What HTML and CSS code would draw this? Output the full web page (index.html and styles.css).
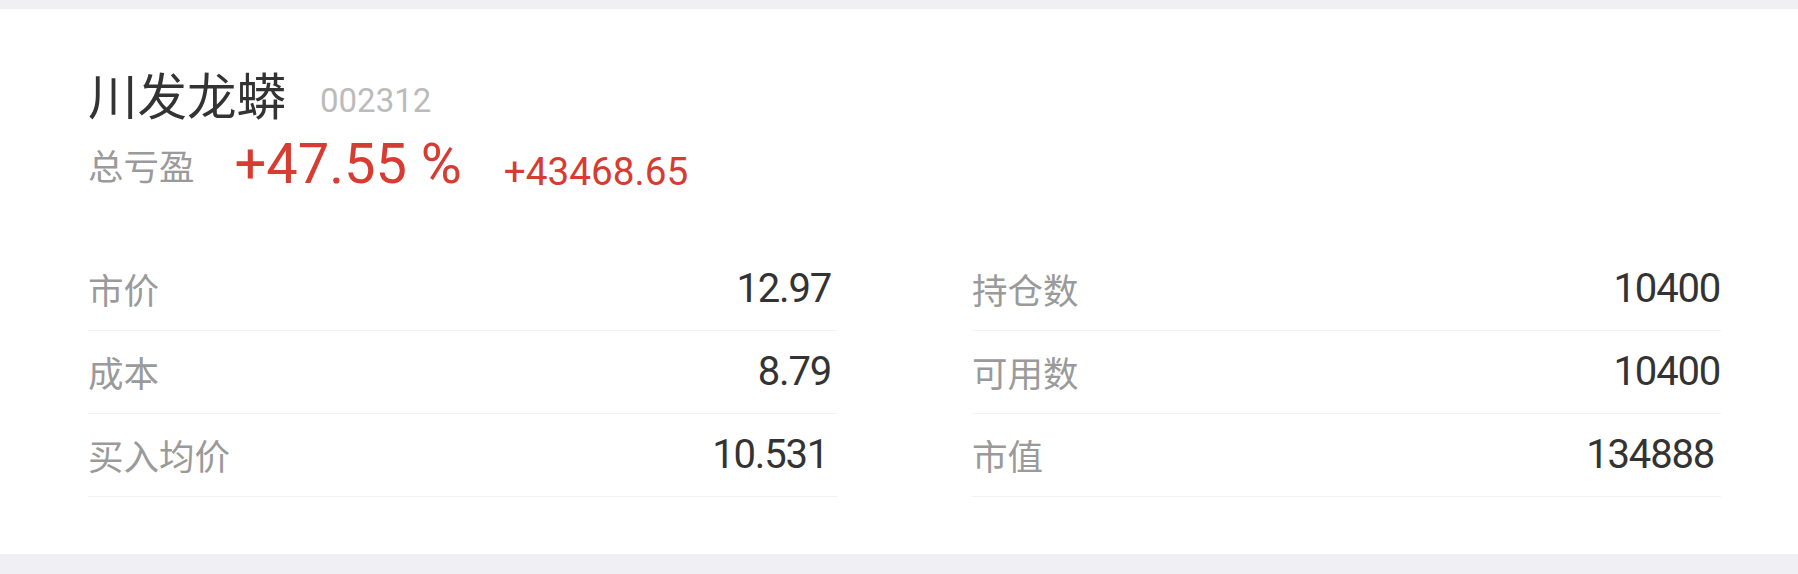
FILE: index.html
```html
<!DOCTYPE html>
<html lang="zh-CN">
<head>
<meta charset="utf-8">
<title>持仓详情</title>
<link rel="stylesheet" href="styles.css">
</head>
<body>
<div class="page">
  <section class="card">
    <div class="title-row">
      <h1 class="name">川发龙蟒</h1>
      <span class="code">002312</span>
    </div>
    <div class="pl-row">
      <span class="pl-label">总亏盈</span>
      <span class="pl-pct">+47.55 %</span>
      <span class="pl-amt">+43468.65</span>
    </div>
    <div class="grid">
      <div class="col col-left">
        <div class="row"><span class="label">市价</span><span class="val">12.97</span></div>
        <div class="row"><span class="label">成本</span><span class="val">8.79</span></div>
        <div class="row"><span class="label">买入均价</span><span class="val val-nudge">10.531</span></div>
      </div>
      <div class="col col-right">
        <div class="row"><span class="label">持仓数</span><span class="val">10400</span></div>
        <div class="row"><span class="label">可用数</span><span class="val">10400</span></div>
        <div class="row"><span class="label">市值</span><span class="val val-nudge-lg">134888</span></div>
      </div>
    </div>
  </section>
</div>
</body>
</html>
```
FILE: styles.css
```css
html, body {
  margin: 0;
  padding: 0;
}
body {
  background: #efeff4;
  font-family: "Noto Sans CJK SC", "Noto Sans", sans-serif;
}
.page {
  padding-top: 9px;
  height: 565px;
  box-sizing: border-box;
}
.card {
  background: #ffffff;
  padding: 55px 77px 57px 88px;
}
.title-row {
  display: flex;
  align-items: flex-end;
  height: 60px;
}
.name {
  margin: 0;
  font-family: "Noto Sans CJK SC", sans-serif;
  font-weight: 400;
  font-size: 49.5px;
  line-height: 60px;
  color: #333333;
}
.code {
  margin-left: 34px;
  font-family: Roboto, "Noto Sans", sans-serif;
  font-size: 33px;
  line-height: 46px;
  color: #bbbbbb;
}
.pl-row {
  display: flex;
  align-items: flex-end;
  margin-top: 10px;
  height: 60px;
}
.pl-label {
  font-family: "Noto Sans CJK SC", sans-serif;
  font-size: 35.5px;
  line-height: 58px;
  color: #9a9a9a;
}
.pl-pct {
  margin-left: 40px;
  font-family: Roboto, sans-serif;
  font-size: 56px;
  line-height: 60px;
  color: #d63c31;
}
.pl-amt {
  margin-left: 42px;
  font-family: Roboto, sans-serif;
  font-size: 38.7px;
  line-height: 44px;
  color: #d63c31;
}
.grid {
  display: grid;
  grid-template-columns: 749px 749px;
  column-gap: 135px;
  margin-top: 54px;
}
.row {
  display: flex;
  justify-content: space-between;
  align-items: center;
  height: 83px;
  box-sizing: border-box;
  border-bottom: 1px solid #f2f2f2;
}
.label {
  font-family: "Noto Sans CJK SC", sans-serif;
  font-size: 35.5px;
  line-height: 48px;
  color: #9a9a9a;
}
.val {
  font-family: Roboto, sans-serif;
  font-size: 40px;
  line-height: 48px;
  letter-spacing: -1.2px;
  color: #333333;
}
.col-left .val {
  padding-right: 6px;
}
.col-right .val {
  padding-right: 1px;
}
.col-left .val-nudge {
  padding-right: 9px;
}
.col-right .val-nudge-lg {
  padding-right: 7px;
}
```
